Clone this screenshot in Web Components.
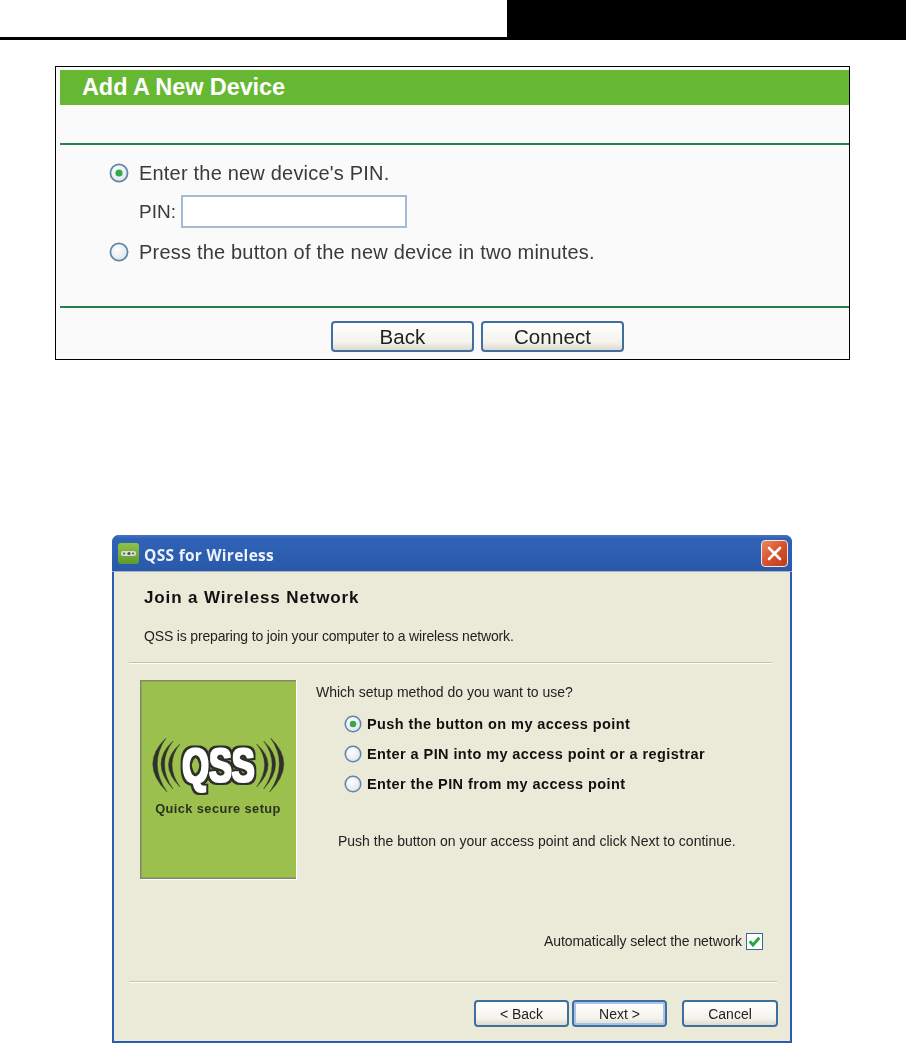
<!DOCTYPE html>
<html><head><meta charset="utf-8">
<style>
html,body{margin:0;padding:0;background:#fff;overflow:hidden}
body{width:906px;height:1043px;font-family:"Liberation Sans",Arial,sans-serif;color:#222}
</style></head><body>
<x-topbar></x-topbar>
<x-device-card></x-device-card>
<x-window></x-window>
<script>
function el(name,css,html){
  customElements.define(name,class extends HTMLElement{
    connectedCallback(){ if(this.shadowRoot) return;
      const r=this.attachShadow({mode:'open'});
      r.innerHTML='<style>'+css+'</style>'+(typeof html==='function'?html(this):html);
    }
  });
}
el('x-topbar',`:host{display:flex;height:37px;border-bottom:3px solid #000}
.w{width:507px}.b{flex:1;background:#000}`,`<div class="w"></div><div class="b"></div>`);

el('x-radio',`:host{display:inline-block;flex:none}svg{display:block}`,h=>{
  const s=h.getAttribute('size')||20,on=h.hasAttribute('checked');
  return `<svg width="${s}" height="${s}" viewBox="0 0 20 20"><defs><radialGradient id="g" cx=".4" cy=".35" r=".8"><stop offset="0" stop-color="#fff"/><stop offset="1" stop-color="#d8dfe8"/></radialGradient></defs>
  <circle cx="10" cy="10" r="8.6" fill="url(#g)" stroke="#5f86a8" stroke-width="1.7"/>${on?'<circle cx="10" cy="10" r="3.6" fill="#35a84a"/>':''}</svg>`;
});

el('x-btn',`:host{display:inline-flex;align-items:center;justify-content:center;box-sizing:border-box;
  border:2px solid #3f6f9e;border-radius:4px;background:linear-gradient(#fff,#f4f3ec 70%,#dedbcd);color:#222;
  width:var(--w,95px);height:var(--h,27px);font:var(--f,14px "Liberation Sans",sans-serif);letter-spacing:var(--ls,0)}
:host([focus]){box-shadow:inset 0 0 0 2px #a9c4ea}`,`<slot></slot>`);

el('x-device-card',`:host{display:block;box-sizing:border-box;margin:26px 56px 0 55px;height:294px;border:1px solid #000;padding:3px 0 0 4px;background:#fafafa;font-size:20px;color:#3a3a3a}
.wrap{filter:blur(.3px)}
.bar{height:35px;background:#66b832;color:#fff;font-weight:bold;font-size:23.5px;line-height:34px;padding-left:22px;letter-spacing:-.1px}
.line{height:2px;background:#2c7d4e}
.l1{margin-top:38px}
.list{padding:14px 0 0 49px;display:flex;flex-direction:column}
.row{display:flex;align-items:center;height:28px;gap:10px;letter-spacing:.2px}
.pin{display:flex;align-items:center;height:33px;margin:8px 0 10px 30px;gap:5px;font-size:19px}
.inp{box-sizing:border-box;width:226px;height:33px;border:2px solid #a3bbd4;background:#fff}
.l2{margin-top:40px}
.foot{display:flex;gap:7px;padding:13px 0 0 271px;--w:143px;--h:31px;--f:20.5px "Liberation Sans",sans-serif;--ls:.1px}
`,`<div class="wrap"><div class="bar">Add A New Device</div><div class="line l1"></div>
<div class="list"><div class="row"><x-radio checked></x-radio><span>Enter the new device's PIN.</span></div>
<div class="pin"><span>PIN:</span><div class="inp"></div></div>
<div class="row"><x-radio></x-radio><span>Press the button of the new device in two minutes.</span></div></div>
<div class="line l2"></div>
<div class="foot"><x-btn>Back</x-btn><x-btn>Connect</x-btn></div></div>`);

el('x-qss-panel',`:host{display:block;width:157px;height:200px;flex:none}svg{display:block}
text{font-family:"Liberation Sans",sans-serif}`,`<svg width="157" height="200" viewBox="0 0 157 200">
<defs><filter id="fat" x="-10%" y="-10%" width="120%" height="120%" color-interpolation-filters="sRGB">
<feMorphology in="SourceAlpha" operator="dilate" radius="1.3" result="w"/>
<feFlood flood-color="#fff"/><feComposite in2="w" operator="in" result="white"/>
<feMorphology in="SourceAlpha" operator="dilate" radius="2.6" result="d"/>
<feFlood flood-color="#2d2f29"/><feComposite in2="d" operator="in" result="dark"/>
<feMerge><feMergeNode in="dark"/><feMergeNode in="white"/></feMerge></filter></defs>
<rect width="157" height="200" fill="#fff"/><rect width="156" height="199" fill="#9bc04e"/>
<path d="M0 0H156V1.5H1.5V197.5H156V199H0Z" fill="#84866a"/>
<g fill="#2f312a" stroke="#2f312a" stroke-width=".4"><path d="M26 58Q-1 84 27 112Q8 84 26 58Z"/><path d="M33 61Q9 83 33 109Q16 84 33 61Z"/><path d="M40 64Q17 84 40 107Q24 84 40 64Z"/>
<g transform="translate(156.6,0) scale(-1,1)"><path d="M26 58Q-1 84 27 112Q8 84 26 58Z"/><path d="M33 61Q9 83 33 109Q16 84 33 61Z"/><path d="M40 64Q17 84 40 107Q24 84 40 64Z"/></g></g>
<g filter="url(#fat)"><text transform="translate(78.5,101.5) scale(.78,1.1)" text-anchor="middle" font-size="44" font-weight="bold" fill="#fff">QSS</text></g>
<text x="78" y="132.5" text-anchor="middle" font-size="12.8" font-weight="bold" fill="#2b3320" letter-spacing=".42">Quick secure setup</text>
</svg>`);

el('x-window',`:host{display:block;box-sizing:border-box;margin:175px 0 0 112px;width:680px;height:508px;border-radius:7px 7px 0 0;overflow:hidden;
  background:#2a5cb0;padding:0 2px 2px 2px;font-size:14px;color:#222}
.wrap{filter:blur(.35px)}
.title{height:37px;margin:0 -2px;padding:0 4px 0 6px;display:flex;align-items:center;gap:5px;color:#eef3fb;font:bold 15.5px "Open Sans",sans-serif;letter-spacing:.3px;
  background:linear-gradient(#4673bd 0,#2f62b6 10%,#2b5cae 70%,#2a59a8 100%);border-bottom:1px solid #aab4be;box-sizing:border-box}
.ico{width:21px;height:21px;border-radius:3px;background:linear-gradient(#8ec24c,#5d9a2c);flex:none;display:flex;align-items:center;justify-content:center}
.t{flex:1;padding-top:3px}
.x{width:27px;height:27px;box-sizing:border-box;border:1px solid #f1e7e0;border-radius:4px;background:linear-gradient(135deg,#e88b62,#d9512c 50%,#bb3a1c);display:flex;align-items:center;justify-content:center}
.body{background:#ebe9d8;height:469px;overflow:hidden}
h1{font:bold 17px "Liberation Sans",sans-serif;letter-spacing:.87px;margin:0;padding-left:30px;height:24px;line-height:24px;margin-top:14px;color:#111}
.sub{padding-left:30px;line-height:24px;margin-top:14px;letter-spacing:-.165px}
.sep{height:1px;background:#c5c2b2;border-bottom:1px solid #fff}
.s1{margin:14px 18px 0 15px}
.main{display:flex;margin:16px 0 0 26px}
.right{margin-left:19px}
.q{line-height:24px;height:24px}
.opts{margin-top:5px;padding-left:28px;font-weight:bold}
.opt{display:flex;align-items:center;height:30px;gap:5px;font-size:14.5px;letter-spacing:.42px;color:#111}
.hint{margin:30px 0 0 22px;line-height:24px}
.auto{display:flex;justify-content:flex-end;align-items:center;gap:4px;height:24px;margin:49px 27px 0 0;letter-spacing:-.06px}
.cb{width:17px;height:17px;box-sizing:border-box;border:1.5px solid #3a6a92;background:#fff;display:block}
.s2{margin:28px 13px 0 15px}
.btns{display:flex;justify-content:flex-end;margin:17px 12px 0 0;gap:3px}
.btns x-btn:last-child{margin-left:12px;--w:96px}
`,`<div class="wrap"><div class="title"><div class="ico"><svg width="15" height="7" viewBox="0 0 15 7"><rect x="0" y="1" width="15" height="5" rx="2" fill="#d7dccb"/><circle cx="8" cy="3.5" r="1.6" fill="#555"/><circle cx="3" cy="3.5" r="1" fill="#555"/><circle cx="12" cy="3.5" r="1" fill="#555"/></svg></div>
<div class="t">QSS for Wireless</div>
<div class="x"><svg width="17" height="17" viewBox="0 0 17 17"><path d="M3 3L14 14M14 3L3 14" stroke="#fff" stroke-width="2.6" stroke-linecap="round"/></svg></div></div>
<div class="body">
<h1>Join a Wireless Network</h1>
<div class="sub">QSS is preparing to join your computer to a wireless network.</div>
<div class="sep s1"></div>
<div class="main"><x-qss-panel></x-qss-panel>
<div class="right"><div class="q">Which setup method do you want to use?</div>
<div class="opts"><div class="opt"><x-radio size="18" checked></x-radio><span>Push the button on my access point</span></div>
<div class="opt"><x-radio size="18"></x-radio><span>Enter a PIN into my access point or a registrar</span></div>
<div class="opt"><x-radio size="18"></x-radio><span>Enter the PIN from my access point</span></div></div>
<div class="hint">Push the button on your access point and click Next to continue.</div></div></div>
<div class="auto"><span>Automatically select the network</span><svg class="cb" viewBox="0 0 14 14"><path d="M2.5 6.8L5.6 10.2L11.5 3.5" fill="none" stroke="#28a745" stroke-width="2.8"/></svg></div>
<div class="sep s2"></div>
<div class="btns"><x-btn>&lt; Back</x-btn><x-btn focus>Next &gt;</x-btn><x-btn>Cancel</x-btn></div>
</div></div>`);
</script>
</body></html>
